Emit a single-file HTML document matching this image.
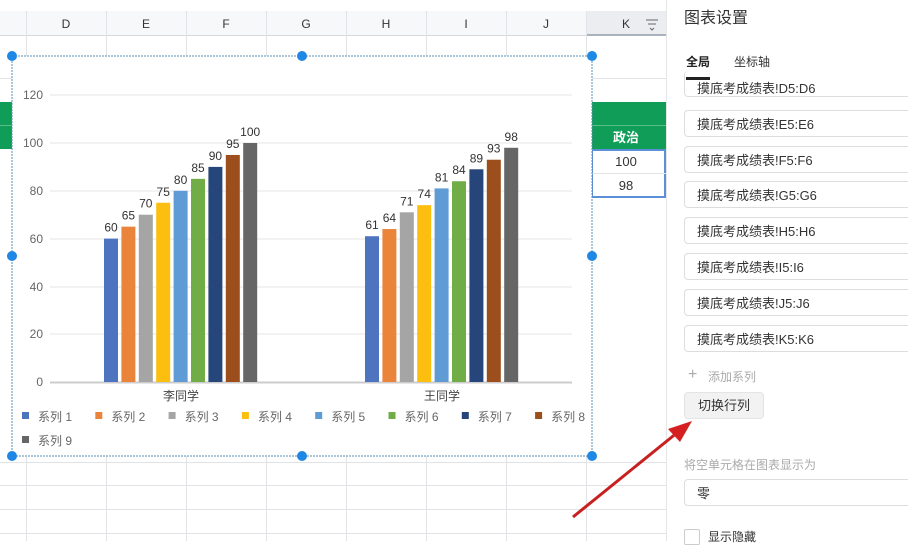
<!DOCTYPE html><html><head><meta charset="utf-8"><style>
*{margin:0;padding:0;box-sizing:border-box}
body{width:908px;height:541px;overflow:hidden;background:#fff;font-family:"Liberation Sans","Noto Sans CJK SC",sans-serif;position:relative}
.a{position:absolute}
.f{position:absolute;left:684px;width:240px;height:27px;border:1px solid #ddd;border-radius:4px;font-size:13px;color:#333;padding:3px 12px;background:#fff}
</style></head><body>
<svg class="a" style="left:0;top:0" width="666" height="541">
<rect x="0" y="11" width="666" height="25" fill="#f7f8fa"/>
<rect x="586" y="11" width="80" height="25" fill="#ebedf0"/>
<line x1="0" y1="35.5" x2="666" y2="35.5" stroke="#d6d9de"/>
<line x1="586" y1="35" x2="666" y2="35" stroke="#a9b3bf" stroke-width="2"/>
<g stroke="#e1e3e6">
<line x1="26.5" y1="11" x2="26.5" y2="541"/><line x1="106.5" y1="11" x2="106.5" y2="541"/><line x1="186.5" y1="11" x2="186.5" y2="541"/><line x1="266.5" y1="11" x2="266.5" y2="541"/><line x1="346.5" y1="11" x2="346.5" y2="541"/><line x1="426.5" y1="11" x2="426.5" y2="541"/><line x1="506.5" y1="11" x2="506.5" y2="541"/><line x1="586.5" y1="11" x2="586.5" y2="541"/>
<line x1="0" y1="78.5" x2="666" y2="78.5"/><line x1="0" y1="462.5" x2="666" y2="462.5"/><line x1="0" y1="485.5" x2="666" y2="485.5"/><line x1="0" y1="509.5" x2="666" y2="509.5"/><line x1="0" y1="533.5" x2="666" y2="533.5"/>
</g>
<g font-size="12" fill="#333" text-anchor="middle"><text x="66" y="28">D</text><text x="146" y="28">E</text><text x="226" y="28">F</text><text x="306" y="28">G</text><text x="386" y="28">H</text><text x="466" y="28">I</text><text x="546" y="28">J</text><text x="626" y="28">K</text></g>
<path d="M646 20h12M648 24h8M650 28l2 2 2-2" stroke="#666" fill="none"/>
<rect x="0" y="102" width="666" height="47" fill="#0f9d58"/>
<line x1="0" y1="125.5" x2="666" y2="125.5" stroke="#5bbf8a"/>
<text x="626" y="142" font-size="13" font-weight="bold" fill="#fff" text-anchor="middle">政治</text>
<rect x="592" y="150" width="73" height="47" fill="none" stroke="#5b8fd6" stroke-width="2"/>
<line x1="592" y1="173.5" x2="666" y2="173.5" stroke="#e1e3e6"/>
<text x="626" y="166" font-size="13" fill="#333" text-anchor="middle">100</text>
<text x="626" y="190" font-size="13" fill="#333" text-anchor="middle">98</text>
<rect x="12" y="56" width="580" height="400" fill="#fff" stroke="#5b8fb5" stroke-dasharray="2,1"/>
<g stroke="#e6e6e6"><line x1="50" y1="95" x2="572" y2="95"/><line x1="50" y1="143" x2="572" y2="143"/><line x1="50" y1="191" x2="572" y2="191"/><line x1="50" y1="239" x2="572" y2="239"/><line x1="50" y1="287" x2="572" y2="287"/><line x1="50" y1="334" x2="572" y2="334"/></g>
<line x1="50" y1="382.5" x2="572" y2="382.5" stroke="#ccc" stroke-width="2"/>
<g font-size="12" fill="#666" text-anchor="end"><text x="43" y="99">120</text><text x="43" y="147">100</text><text x="43" y="195">80</text><text x="43" y="243">60</text><text x="43" y="291">40</text><text x="43" y="338">20</text><text x="43" y="386">0</text></g>
<g id="b"></g>
<g font-size="12" fill="#444" text-anchor="middle"><text x="181" y="400">李同学</text><text x="442" y="400">王同学</text></g>
<g id="l" font-size="12" fill="#666"></g>
<g fill="#1e88e5"><circle cx="12" cy="56" r="5"/><circle cx="302" cy="56" r="5"/><circle cx="592" cy="56" r="5"/><circle cx="12" cy="256" r="5"/><circle cx="592" cy="256" r="5"/><circle cx="12" cy="456" r="5"/><circle cx="302" cy="456" r="5"/><circle cx="592" cy="456" r="5"/></g>
</svg>
<div class="a" style="left:666px;top:0;width:242px;height:541px;background:#fff;border-left:1px solid #e6e6e6"></div>
<div class="a" style="left:684px;top:4px;font-size:16px;color:#333">图表设置</div>
<div class="a" style="left:686px;top:53px;font-size:12px;color:#222;font-weight:bold">全局</div>
<div class="a" style="left:734px;top:53px;font-size:12px;color:#333">坐标轴</div>
<div class="f" style="top:71px;height:26px;border-top:none;padding-top:7px">摸底考成绩表!D5:D6</div>
<div class="a" style="left:686px;top:77px;width:24px;height:3px;background:#222"></div>
<div class="f" style="top:110px">摸底考成绩表!E5:E6</div>
<div class="f" style="top:146px">摸底考成绩表!F5:F6</div>
<div class="f" style="top:181px">摸底考成绩表!G5:G6</div>
<div class="f" style="top:217px">摸底考成绩表!H5:H6</div>
<div class="f" style="top:253px">摸底考成绩表!I5:I6</div>
<div class="f" style="top:289px">摸底考成绩表!J5:J6</div>
<div class="f" style="top:325px">摸底考成绩表!K5:K6</div>
<div class="a" style="left:688px;top:366px;font-size:16px;color:#aaa">+</div>
<div class="a" style="left:708px;top:368px;font-size:12px;color:#aaa">添加系列</div>
<div class="a" style="left:684px;top:392px;width:80px;height:27px;background:#f2f2f2;border:1px solid #e4e4e4;border-radius:4px;font-size:13px;color:#333;text-align:center;line-height:25px">切换行列</div>
<div class="a" style="left:684px;top:456px;font-size:12px;color:#aaa">将空单元格在图表显示为</div>
<div class="f" style="top:479px">零</div>
<div class="a" style="left:684px;top:529px;width:16px;height:16px;border:1px solid #ccc;border-radius:2px"></div>
<div class="a" style="left:708px;top:528px;font-size:12px;color:#333">显示隐藏</div>
<svg class="a" style="left:0;top:0" width="908" height="541"><line x1="573" y1="517" x2="678" y2="432" stroke="#c8201e" stroke-width="3"/><polygon points="692,421 668,429 680,442" fill="#d42020"/></svg>
<script>
var c=["#4e74c0","#eb843b","#a5a5a5","#fcbf10","#5f9bd4","#70ad47","#26457a","#9c4e1c","#666"];
var v1=[60,65,70,75,80,85,90,95,100],v2=[61,64,71,74,81,84,89,93,98];
var s="";
function bars(x0,v){for(var i=0;i<9;i++){var x=x0+i*17.4,h=v[i]*2.39,y=382-h;s+='<rect x="'+x+'" y="'+y+'" width="14" height="'+h+'" fill="'+c[i]+'"/><text x="'+(x+7)+'" y="'+(y-7)+'" font-size="12" fill="#333" text-anchor="middle">'+v[i]+'</text>';}}
bars(104,v1);bars(365,v2);
document.getElementById("b").innerHTML=s;
var l="";for(var i=0;i<9;i++){var x=i<8?22+i*73.3:22,y=i<8?417:441;l+='<rect x="'+x+'" y="'+(y-5)+'" width="7" height="7" fill="'+c[i]+'"/><text x="'+(x+16)+'" y="'+(y+4)+'">系列 '+(i+1)+'</text>';}
document.getElementById("l").innerHTML=l;
</script>
</body></html>
